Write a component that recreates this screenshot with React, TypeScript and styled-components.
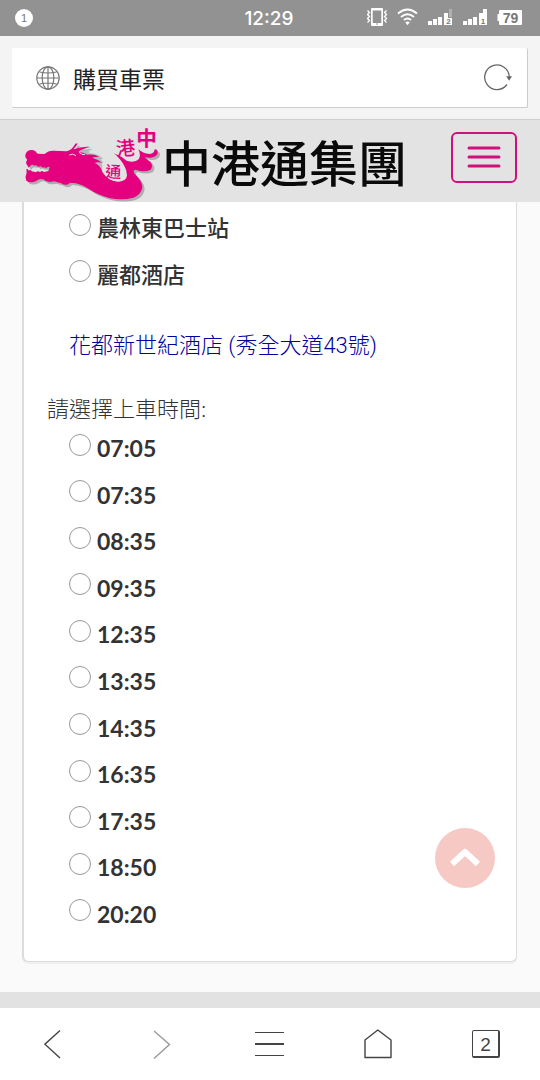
import React from 'react';
import styled, { createGlobalStyle } from 'styled-components';

const cjk = '"Noto Sans CJK TC", sans-serif';
const magenta = '#d0117c';

const GlobalStyle = createGlobalStyle`
  * { box-sizing: border-box; }
  body {
    margin: 0;
    background: #fafafa;
    color: #333;
    font-family: Lato, ${cjk};
  }
  button { padding: 0; border: 0; background: none; font: inherit; color: inherit; cursor: pointer; }
  svg { display: block; }
`;

const Screen = styled.div`
  display: flex;
  flex-direction: column;
  min-height: 100vh;
`;

const StatusBar = styled.div`
  display: grid;
  grid-template-columns: 1fr auto 1fr;
  align-items: center;
  height: 36px;
  padding: 0 17px 0 15px;
  background: #929292;
  color: #fff;
  font-family: "Liberation Sans", sans-serif;
`;

const NoticeCount = styled.span`
  width: 18px;
  height: 18px;
  border-radius: 50%;
  background: #fff;
  color: #777;
  font-size: 11px;
  line-height: 18px;
  text-align: center;
`;

const Clock = styled.span`
  font-family: Inter, sans-serif;
  font-size: 19px;
  font-weight: 500;
`;

const StatusIcons = styled.div`
  display: flex;
  justify-content: flex-end;
`;

const AddressArea = styled.div`
  padding: 12px 12px 11px;
  background: #f4f4f4;
  border-bottom: 1px solid #cdcfcd;
`;

const AddressBox = styled.div`
  display: flex;
  align-items: center;
  gap: 13px;
  height: 60px;
  padding: 0 14px 0 24px;
  background: #fff;
  border: 1px solid #ccc;
  border-width: 0 1px 1px 0;
  border-radius: 2px;
`;

const AddressTitle = styled.span`
  flex: 1;
  color: #222;
  font-family: ${cjk};
  font-size: 23px;
  line-height: 32px;
`;

const SiteHeader = styled.header`
  display: flex;
  align-items: center;
  height: 82px;
  padding: 0 23px 0 10px;
  background: #e3e3e3;
`;

const Brand = styled.a`
  display: flex;
  align-items: center;
  color: #0a0a0a;
  text-decoration: none;
`;

const BrandName = styled.span`
  margin-left: -8px;
  font-family: ${cjk};
  font-size: 49px;
  font-weight: 500;
  line-height: 72px;
  white-space: nowrap;
`;

const MenuButton = styled.button`
  display: grid;
  place-items: center;
  width: 66px;
  height: 51px;
  margin: 0 0 8px auto;
  && {
    border: 2px solid ${magenta};
    border-radius: 6px;
  }
`;

const Main = styled.main`
  flex: 1;
  padding: 0 23px 30px 22px;
`;

const Card = styled.form`
  padding: 3px 24px 24px 23px;
  background: #fff;
  border: solid #dcdcdc;
  border-width: 0 1px 1px 2px;
  border-radius: 0 0 6px 6px;
  box-shadow: 0 2px 1px #efefef;
`;

const Group = styled.fieldset`
  min-width: 0;
  margin: 0;
  padding: 0;
  border: 0;
`;

const Prompt = styled.legend`
  padding: 0;
  font-size: 22px;
  font-weight: 300;
  line-height: 32px;
`;

const Options = styled.div<{ $height: number }>`
  display: grid;
  grid-auto-rows: 1fr;
  min-height: ${(p) => p.$height}px;
  padding-left: 22px;
`;

const Option = styled.label<{ $heavy?: boolean }>`
  display: flex;
  align-items: center;
  gap: 6px;
  font-size: ${(p) => (p.$heavy ? 22 : 23)}px;
  font-weight: ${(p) => (p.$heavy ? 500 : 700)};
  line-height: 32px;
`;

const Radio = styled.input`
  appearance: none;
  width: 22px;
  height: 22px;
  margin: 0 0 7px;
  border: 1px solid #999;
  border-radius: 50%;
  background: #fff;
  &:checked { box-shadow: inset 0 0 0 5px #fff; background: ${magenta}; }
`;

const PlaceLink = styled.a`
  display: block;
  margin: 32px 0 31px 22px;
  color: #00009c;
  font-family: Roboto, ${cjk};
  font-size: 22px;
  font-weight: 300;
  line-height: 32px;
  text-decoration: none;
`;

const TopButton = styled.button`
  position: fixed;
  right: 45px;
  bottom: 192px;
  display: grid;
  place-items: center;
  width: 60px;
  height: 60px;
  && {
    border-radius: 50%;
    background: #f6c9c5;
  }
`;

const FooterStrip = styled.div`
  height: 16px;
  background: #e2e2e2;
`;

const BottomNav = styled.nav`
  display: grid;
  grid-template-columns: repeat(5, 1fr);
  height: 72px;
  background: #fff;
`;

const NavButton = styled.button`
  display: grid;
  place-items: center;
`;

const TabCount = styled.span`
  width: 28px;
  height: 28px;
  border: 1px solid #444;
  border-width: 1px 2px 2px 1px;
  border-radius: 2px;
  color: #444;
  font-family: "Liberation Sans", sans-serif;
  font-size: 19px;
  line-height: 27px;
`;

const bodyPath =
  'M47 108 Q52 94 68 96 Q78 98 82 107 L104 108 Q114 97 132 98 L170 100 Q188 94 196 77 L203 76 Q199 86 190 94 Q218 84 242 87 Q218 91 204 102 Q222 103 232 110 Q252 108 268 116 Q254 116 246 119 Q264 124 276 134 Q262 132 254 134 Q270 142 276 158 Q282 174 302 185 Q326 195 342 184 Q356 172 346 150 Q334 124 312 106 Q336 116 350 128 Q374 136 386 124 Q394 112 385 94 Q398 106 418 108 Q434 106 434 94 Q444 94 443 105 Q440 117 422 119 Q410 119 404 116 Q411 126 422 132 Q430 144 422 155 Q404 164 376 155 Q364 158 380 174 Q400 194 396 212 Q390 232 370 239 Q336 248 298 240 Q262 230 236 212 Q216 200 198 196 L180 194 Q168 206 154 196 L132 190 Q110 196 100 184 Q88 180 80 188 Q62 197 49 188 Q44 176 50 164 L49 154 Q54 151 56 158 Q61 153 65 160 L78 163 Q84 157 90 163 Q96 156 101 162 Q110 160 116 158 L119 147 Q112 145 108 151 Q103 145 98 149 Q93 141 85 147 Q80 139 74 143 Q67 138 61 143 L56 149 L51 140 Q45 134 52 125 Q43 118 47 108 Z';

function DragonLogo() {
  return (
    <svg width="160" height="82" viewBox="0 6 480 246" aria-hidden="true">
      <path d={bodyPath} fill="#adadad" transform="translate(7 7)" />
      <path d="M204 102 Q226 94 244 98 Q230 101 242 106 Q260 106 280 122 Q266 121 280 132 Q292 146 294 160 L268 150 Z" fill="#b9b9b9" />
      <path d={bodyPath} fill="#e5007f" />
      <path d="M276 134 Q294 122 318 137 Q346 150 351 172 Q350 189 326 191 Q294 188 277 161 Z" fill="#e3e3e3" />
      <path d="M178 111 Q188 105 198 113 M207 103 Q214 110 225 110" fill="none" stroke="#e3e3e3" strokeWidth="3" />
      <g fill="#e5007f" fontFamily={cjk} fontWeight="500" textAnchor="middle">
        <text x="310" y="179" fontSize="48" transform="rotate(3 310 160)">通</text>
        <text x="347" y="112" fontSize="58" transform="rotate(-6 347 90)">港</text>
        <text x="410" y="84" fontSize="62" fontWeight="700">中</text>
      </g>
    </svg>
  );
}

function SystemIcons() {
  return (
    <svg width="156" height="20" viewBox="0 0 156 20" fill="#fff" aria-hidden="true">
      <path fillRule="evenodd" d="M5 0h10q1 0 1 1v16q0 1-1 1H5q-1 0-1-1V1q0-1 1-1Zm.7 2.5v12.5h8.600V2.500Zm3.300 13v1h2v-1Z" />
      <path d="m0 3 2 2-2 2 2 2-2 2 2 2-2 2M19 3l-2 2 2 2-2 2 2 2-2 2 2 2" fill="none" stroke="#fff" strokeWidth="1.300" transform="translate(.5 -.500)" />
      <g fill="none" stroke="#fff" strokeWidth="2">
        <path d="M31 5.500q9.500-8 19 0M34 9q6.500-5.500 13 0M37 12q3.500-3 7 0" />
      </g>
      <path d="m38.300 14.300 2.200 2.900 2.200-2.900q-2.200-1.800-4.400 0Z" />
      <path d="M61 13h4v4h-4zM66 11h4v6h-4zM71 9h4v8h-4zM77 5h4v5h4v7h-8z" />
      <path d="M82 1h3v8h-3z" fill="#b0b0b0" />
      <path d="M96 13h4v4h-4zM101 11h4v6h-4zM106 9h4v8h-4zM112 5h4V1h4v16h-8z" />
      <path d="M133 2h21q1 0 1 1v13q0 1-1 1h-21q-1 0-1-1v-3h-1.500V6H132V3q0-1 1-1Z" />
      <g fill="#777" fontFamily='"Liberation Sans", sans-serif' fontWeight="700" textAnchor="middle">
        <text x="81.500" y="16" fontSize="8">2</text>
        <text x="116" y="16" fontSize="8">1</text>
        <text x="143.500" y="14.500" fontSize="14">79</text>
      </g>
    </svg>
  );
}

const stops = ['農林東巴士站', '麗都酒店'];
const times = ['07:05', '07:35', '08:35', '09:35', '12:35', '13:35', '14:35', '16:35', '17:35', '18:50', '20:20'];

export default function App() {
  return (
    <Screen>
      <GlobalStyle />
      <StatusBar>
        <NoticeCount>1</NoticeCount>
        <Clock>12:29</Clock>
        <StatusIcons><SystemIcons /></StatusIcons>
      </StatusBar>
      <AddressArea>
        <AddressBox>
          <svg width="24" height="24" viewBox="0 0 24 24" fill="none" stroke="#777" strokeWidth="1.200" aria-hidden="true">
            <circle cx="12" cy="12" r="11.200" />
            <ellipse cx="12" cy="12" rx="5.800" ry="11.200" />
            <path d="M1 12h22M12 1v22M3.500 6q8.500 2 17 0M3.500 18q8.500-2 17 0" />
          </svg>
          <AddressTitle>購買車票</AddressTitle>
          <button type="button" aria-label="重新載入">
            <svg width="30" height="28" viewBox="0 0 30 28" aria-hidden="true">
              <path d="M24 20.500A12.300 12.300 0 1 1 26.300 13" fill="none" stroke="#666" strokeWidth="1.300" />
              <path d="M23.200 12.300h5.800l-2.900 4.500Z" fill="#666" />
            </svg>
          </button>
        </AddressBox>
      </AddressArea>
      <SiteHeader>
        <Brand href="#">
          <DragonLogo />
          <BrandName>中港通集團</BrandName>
        </Brand>
        <MenuButton type="button" aria-label="選單">
          <svg width="34" height="22" viewBox="0 0 34 22" stroke={magenta} strokeWidth="3" strokeLinecap="round" aria-hidden="true">
            <path d="M2 2h30M2 11h30M2 20h30" />
          </svg>
        </MenuButton>
      </SiteHeader>
      <Main>
        <Card>
          <Group aria-label="上車地點">
            <Options $height={93}>
              {stops.map((stop) => (
                <Option key={stop} $heavy>
                  <Radio type="radio" name="stop" value={stop} />
                  {stop}
                </Option>
              ))}
            </Options>
          </Group>
          <PlaceLink href="#">花都新世紀酒店 (秀全大道43號)</PlaceLink>
          <Group>
            <Prompt>請選擇上車時間:</Prompt>
            <Options $height={512}>
              {times.map((time) => (
                <Option key={time}>
                  <Radio type="radio" name="time" value={time} />
                  {time}
                </Option>
              ))}
            </Options>
          </Group>
        </Card>
      </Main>
      <TopButton type="button" aria-label="回到頂部">
        <svg width="34" height="22" viewBox="0 0 34 22" fill="none" stroke="#fff" strokeWidth="6" aria-hidden="true">
          <path d="M4 17 17 5l13 12" strokeLinejoin="round" />
        </svg>
      </TopButton>
      <FooterStrip />
      <BottomNav>
        <NavButton type="button" aria-label="上一頁">
          <svg width="20" height="30" viewBox="0 0 20 30" fill="none" stroke="#444" strokeWidth="1.400" aria-hidden="true">
            <path d="M16 1.500.9 15.200 16 29" />
          </svg>
        </NavButton>
        <NavButton type="button" aria-label="下一頁">
          <svg width="18" height="30" viewBox="0 0 18 30" fill="none" stroke="#999" strokeWidth="1.400" aria-hidden="true">
            <path d="m1 2 15.500 13.500L1 29.500" />
          </svg>
        </NavButton>
        <NavButton type="button" aria-label="選單">
          <svg width="30" height="26" viewBox="0 0 30 26" fill="#444" aria-hidden="true">
            <path d="M0 1h29v1H0zM0 12h29v2H0zM0 24h29v1H0z" />
          </svg>
        </NavButton>
        <NavButton type="button" aria-label="首頁">
          <svg width="28" height="30" viewBox="0 0 28 30" fill="none" stroke="#444" strokeWidth="1.400" strokeLinejoin="round" aria-hidden="true">
            <path d="M1 11 13.800 1 27 11v17.500H1Z" />
          </svg>
        </NavButton>
        <NavButton type="button" aria-label="分頁">
          <TabCount>2</TabCount>
        </NavButton>
      </BottomNav>
    </Screen>
  );
}
